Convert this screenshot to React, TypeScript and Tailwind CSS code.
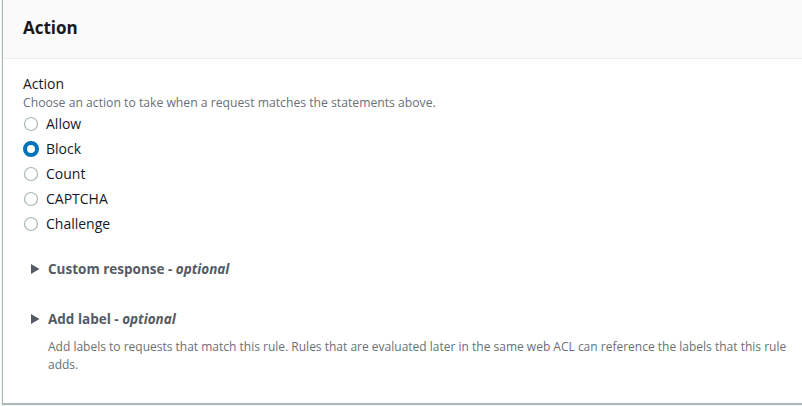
import React from "react";

const options = ["Allow", "Block", "Count", "CAPTCHA", "Challenge"];

function Radio({ checked }: { checked: boolean }) {
  return (
    <svg width="16" height="16" viewBox="0 0 16 16" className="shrink-0">
      {checked ? (
        <>
          <circle cx="8" cy="8" r="6" fill="white" stroke="#0073bb" strokeWidth="4" />
        </>
      ) : (
        <circle cx="8" cy="8" r="6.5" fill="white" stroke="#aab7b8" strokeWidth="1.2" />
      )}
    </svg>
  );
}

function Caret() {
  return (
    <svg width="10" height="12" viewBox="0 0 10 12" className="shrink-0">
      <polygon points="1,1 9.5,6 1,11" fill="#545b64" />
    </svg>
  );
}

export default function App() {
  return (
    <div
      className="w-[802px] h-[406px] bg-white overflow-hidden"
      style={{ fontFamily: '"Open Sans", "Noto Sans", Arial, sans-serif' }}
    >
      <div className="ml-[2px] w-[820px] h-[404px] border-l border-b border-[#aab7b8] bg-white shadow-[0_1px_1px_0_rgba(0,28,36,0.3)]">
        <div className="h-[59px] bg-[#fafafa] border-b border-[#eaeded] pl-[20px] flex items-center">
          <h2 className="text-[17px] font-bold text-[#16191f] leading-[22px] mt-[-2px]">Action</h2>
        </div>
        <div className="pl-[20px] pt-[15px]">
          <div className="text-[14px] text-[#16191f] leading-[20px]">Action</div>
          <div className="text-[12.2px] text-[#687078] leading-[16px] mt-[1px]">
            Choose an action to take when a request matches the statements above.
          </div>
          <div className="flex flex-col mt-0">
            {options.map((o) => (
              <div key={o} className="flex items-center h-[25px]">
                <Radio checked={o === "Block"} />
                <span className="ml-[7px] text-[14px] text-[#16191f] leading-[20px]">{o}</span>
              </div>
            ))}
          </div>
          <div className="mt-[23px] pl-[7px] flex items-center h-[20px]">
            <Caret />
            <span className="ml-[8px] text-[13.5px] font-bold text-[#545b64]">
              Custom response - <i>optional</i>
            </span>
          </div>
          <div className="mt-[30px] pl-[7px] flex items-center h-[20px]">
            <Caret />
            <span className="ml-[8px] text-[13.5px] font-bold text-[#545b64]">
              Add label - <i>optional</i>
            </span>
          </div>
          <div className="pl-[25px] mt-[9px] w-[765px] text-[12px] leading-[18px] text-[#687078]">
            Add labels to requests that match this rule. Rules that are evaluated later in the same web ACL can reference the labels that this rule adds.
          </div>
        </div>
      </div>
    </div>
  );
}
